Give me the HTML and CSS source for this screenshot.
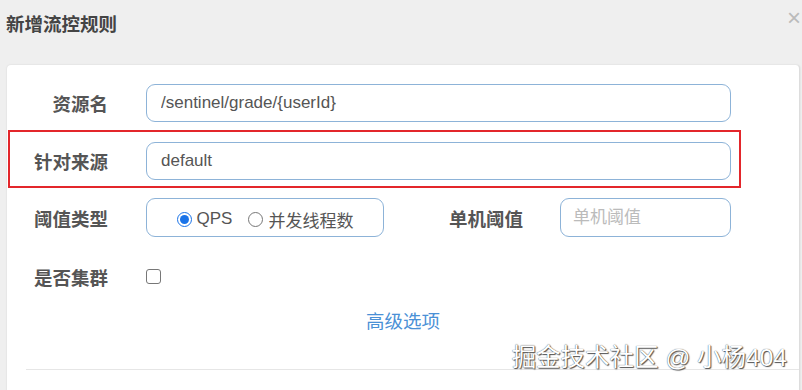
FILE: index.html
```html
<!DOCTYPE html>
<html lang="zh-CN">
<head>
    <meta charset="UTF-8">
    <meta name="viewport" content="width=device-width, initial-scale=1.0">
    <title>新增流控规则</title>
    <link rel="stylesheet" href="styles.css">
</head>
<body>
    <div class="modal">
        <div class="modal-header">
            <h4 class="modal-title">新增流控规则</h4>
            <span class="close">×</span>
        </div>

        <div class="modal-body">
            <form class="rule-form">
                <div class="form-row">
                    <label class="form-label">资源名</label>
                    <input type="text" class="form-input input-wide" value="/sentinel/grade/{userId}"/>
                </div>

                <div class="form-row is-marked">
                    <label class="form-label">针对来源</label>
                    <input type="text" class="form-input input-wide" value="default"/>
                </div>

                <div class="form-row row-type">
                    <label class="form-label">阈值类型</label>
                    <div class="radio-group">
                        <label class="radio-item">
                            <input type="radio" name="grade" value="1" checked>
                            <span>QPS</span>
                        </label>
                        <label class="radio-item">
                            <input type="radio" name="grade" value="0">
                            <span>并发线程数</span>
                        </label>
                    </div>
                    <label class="form-label label-inline">单机阈值</label>
                    <input type="text" class="form-input input-short" placeholder="单机阈值"/>
                </div>

                <div class="form-row row-cluster">
                    <label class="form-label">是否集群</label>
                    <input type="checkbox" class="form-check"/>
                </div>

                <div class="advanced">
                    <a href="#">高级选项</a>
                </div>

                <div class="divider"></div>
            </form>
        </div>
    </div>

    <div class="watermark">掘金技术社区 @ 小杨404</div>
</body>
</html>
```

FILE: styles.css
```css
html, body {
    margin: 0;
    padding: 0;
    background-color: #efefef;
    overflow: hidden;
    font-family: "Liberation Sans", "Noto Sans CJK SC", sans-serif;
}

.modal-header {
    display: flex;
    justify-content: space-between;
    height: 65px;
    box-sizing: border-box;
    padding: 15px 0 0 6px;
}

.modal-title {
    margin: 0;
    font-size: 18.5px;
    line-height: 20px;
    font-weight: bold;
    color: #444;
}

.close {
    align-self: flex-start;
    margin-top: -11px;
    margin-right: 1px;
    font-size: 24px;
    color: #bbb;
}

.modal-body {
    margin-left: 7px;
    width: 793px;
    height: 340px;
    box-sizing: border-box;
    padding-top: 19px;
    background-color: white;
    border-radius: 4px 4px 0 0;
    border-right: 1px solid #ddd;
    box-shadow: 0 0 2px rgba(0, 0, 0, 0.12);
}

.form-row {
    display: flex;
    align-items: center;
    height: 38px;
    margin-bottom: 20px;
}

.row-type {
    height: 39px;
    margin-top: -2px;
}

.row-cluster {
    height: 39px;
    margin-top: 3px;
    margin-bottom: 0;
}

/* marcação vermelha sobre a linha "针对来源" */
.is-marked {
    position: relative;
}

.is-marked::before {
    content: "";
    position: absolute;
    top: -12px;
    bottom: -8px;
    left: 1px;
    width: 733px;
    box-sizing: border-box;
    border: 2px solid #e3262b;
}

.form-label {
    width: 101px;
    margin-right: 38px;
    text-align: right;
    font-size: 18.5px;
    font-weight: bold;
    color: #555;
    flex-shrink: 0;
}

.label-inline {
    width: 139px;
    margin-right: 37px;
}

.form-input {
    height: 38px;
    box-sizing: border-box;
    border: 1px solid #8db3d8;
    border-radius: 9px;
    padding: 0 14px;
    font-family: inherit;
    font-size: 17px;
    color: #555;
    outline: none;
}

.input-wide {
    width: 585px;
}

.input-short {
    width: 171px;
    height: 39px;
    padding-left: 12px;
}

.input-short::placeholder {
    color: #bbb;
}

.radio-group {
    display: flex;
    align-items: center;
    justify-content: center;
    width: 238px;
    height: 39px;
    box-sizing: border-box;
    border: 1px solid #8db3d8;
    border-radius: 9px;
    padding-top: 3px;
    font-size: 17px;
    color: #555;
}

.radio-item {
    display: flex;
    align-items: center;
    gap: 5px;
}

.radio-item + .radio-item {
    margin-left: 16px;
}

.radio-item input {
    width: 15px;
    height: 15px;
    margin: 0;
    accent-color: #1a73e8;
}

.form-check {
    appearance: none;
    width: 15px;
    height: 15px;
    margin: 0;
    border: 1.5px solid #777;
    border-radius: 3px;
    background-color: white;
}

.advanced {
    margin-top: 14px;
    text-align: center;
    line-height: 24px;
}

.advanced a {
    font-size: 18.5px;
    color: #4a90d6;
    text-decoration: none;
}

.divider {
    margin: 34px 0 0 19px;
    border-top: 1px solid #e6e6e6;
}

.watermark {
    position: absolute;
    right: 15px;
    top: 342px;
    font-size: 24.5px;
    line-height: 32px;
    color: white;
    text-shadow: 0 0 1px #333, 1px 1px 1px #555;
}
```
